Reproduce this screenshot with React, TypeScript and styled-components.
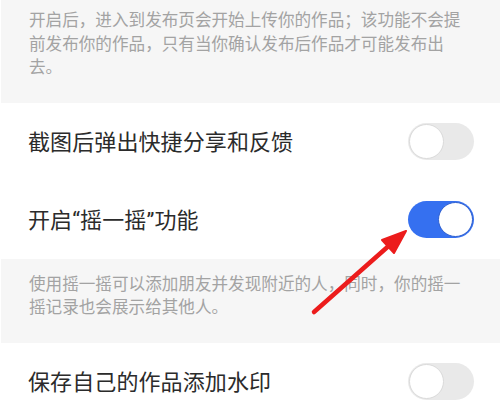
import * as React from "react";
import styled, { createGlobalStyle } from "styled-components";

const GlobalStyle = createGlobalStyle`
	html, body {
		margin: 0;
		padding: 0;
		background: #ffffff;
	}
	body {
		font-family: "Noto Sans CJK SC", "Noto Sans", sans-serif;
	}
`;

export default function App() {
	const settings = [
		{ title: <>截图后弹出快捷分享和反馈</>, key: "shot", on: false },
		{
			title: (
				<>
					开启<Quote>“</Quote>摇一摇<Quote>”</Quote>功能
				</>
			),
			key: "shake",
			on: true,
			note: "使用摇一摇可以添加朋友并发现附近的人，同时，你的摇一摇记录也会展示给其他人。",
		},
		{ title: <>保存自己的作品添加水印</>, key: "mark", on: false },
	];

	return (
		<>
			<GlobalStyle />
			<Page>
				<Note $first>
					开启后，进入到发布页会开始上传你的作品；该功能不会提前发布你的作品，只有当你确认发布后作品才可能发布出去。
				</Note>
				{settings.map((item) => (
					<React.Fragment key={item.key}>
						<Row>
							<Title>{item.title}</Title>
							<Switch $on={item.on}>
								<Knob $on={item.on} />
							</Switch>
						</Row>
						{item.note && <Note>{item.note}</Note>}
					</React.Fragment>
				))}
				<Arrow viewBox="0 0 500 416" width="500" height="416">
					<line x1="314" y1="312" x2="392" y2="243" stroke="#ec1c1c" strokeWidth="4.5" strokeLinecap="round" />
					<polygon points="406,231 382,240 394,253" fill="#ec1c1c" stroke="#ec1c1c" strokeWidth="2" strokeLinejoin="round" />
				</Arrow>
			</Page>
		</>
	);
}

const Page = styled.div`
	position: relative;
	width: 500px;
	height: 416px;
	overflow: hidden;
	background: #ffffff;
`;

const Note = styled.div<{ $first?: boolean }>`
	background: #f6f6f6;
	color: #a3a3a3;
	font-size: 16.6px;
	line-height: 23.5px;
	padding: ${(p) => (p.$first ? "8px" : "13px")} 32px 24px 28px;
	margin-left: 1px;
`;

const Row = styled.div`
	height: 78px;
	display: flex;
	align-items: center;
	justify-content: space-between;
	padding: 0 26px 0 28px;
`;

const Title = styled.div`
	font-size: 22px;
	color: #2b2b2b;
	letter-spacing: 0.1px;
	margin-top: -3px;
`;

const Quote = styled.span`
	font-family: "Roboto", "Liberation Sans", sans-serif;
`;

const Switch = styled.div<{ $on: boolean }>`
	width: 66px;
	height: 37px;
	border-radius: 19px;
	background: ${(p) => (p.$on ? "#3570f0" : "#e9e9e9")};
	display: flex;
	align-items: center;
	justify-content: ${(p) => (p.$on ? "flex-end" : "flex-start")};
	padding: 0 1px;
	box-sizing: border-box;
`;

const Knob = styled.div<{ $on: boolean }>`
	width: 35px;
	height: 35px;
	border-radius: 50%;
	background: #ffffff;
	box-sizing: border-box;
	border: 1px solid ${(p) => (p.$on ? "#2e5fcf" : "#dadada")};
`;

const Arrow = styled.svg`
	position: absolute;
	left: 0;
	top: 0;
	pointer-events: none;
`;
